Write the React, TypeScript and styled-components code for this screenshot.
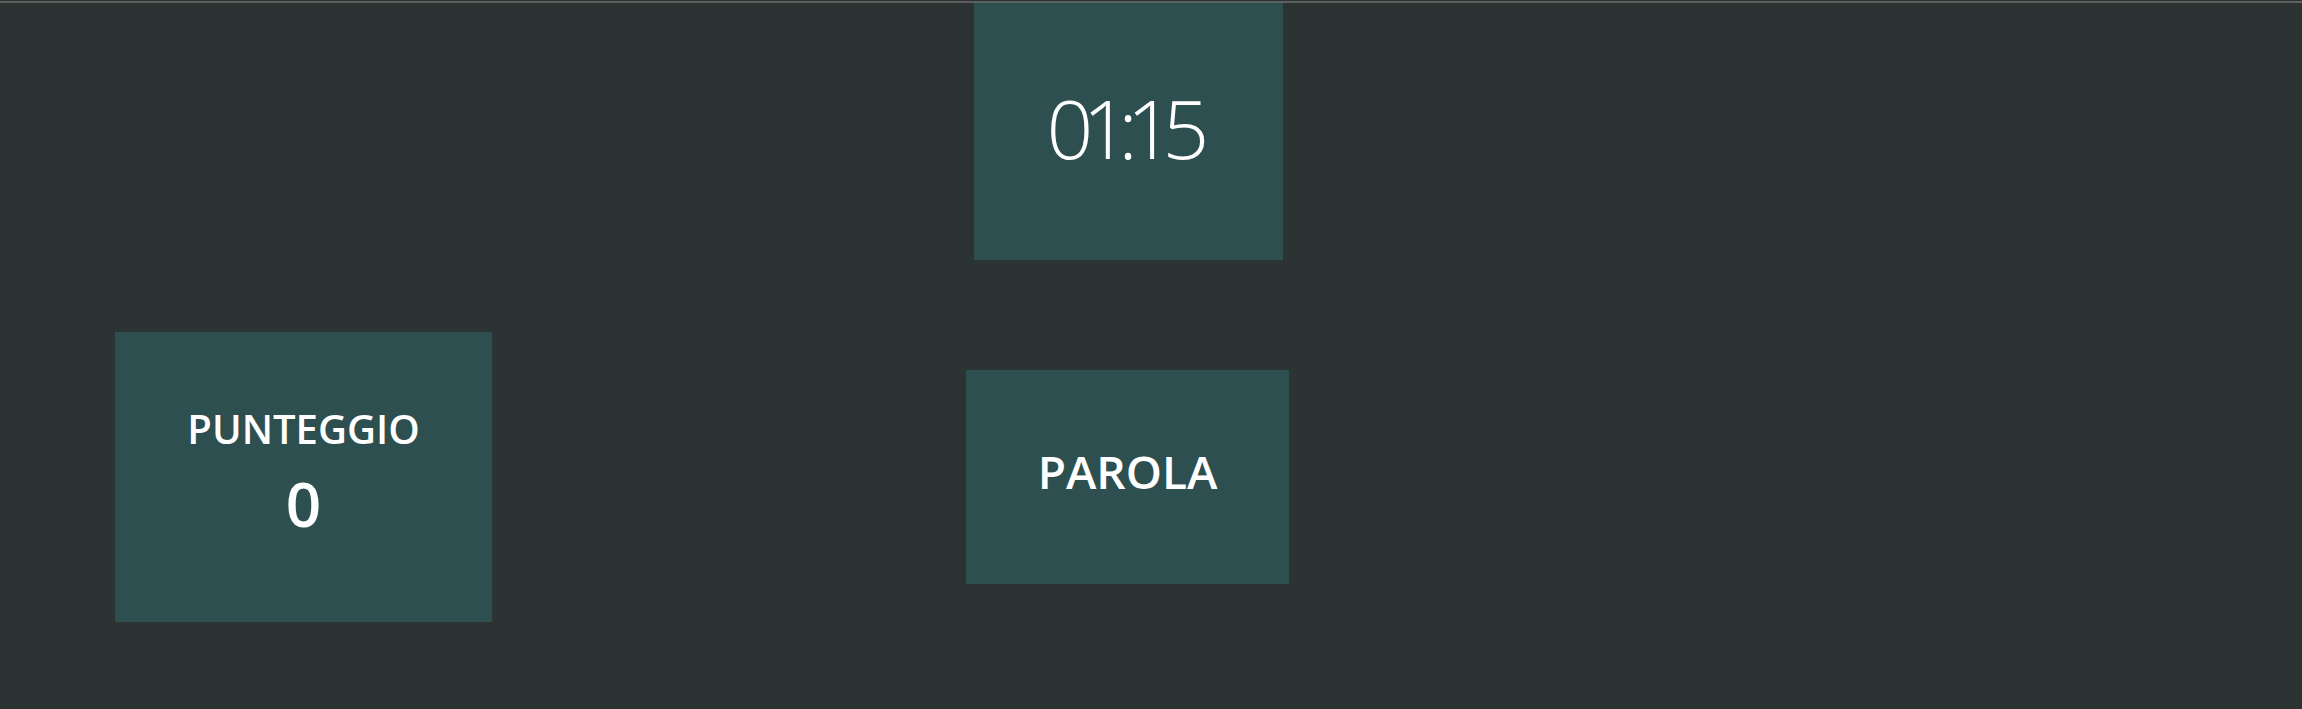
import React from "react";
import styled, { createGlobalStyle } from "styled-components";

const Global = createGlobalStyle`
  html, body { margin: 0; padding: 0; }
  body {
    background: #2b3333;
    font-family: "Open Sans", "Noto Sans", "DejaVu Sans", sans-serif;
    color: #ffffff;
  }
`;

const Page = styled.div`
  width: 2302px;
  height: 709px;
  background: #2b3333;
  border-top: 1px solid #2b3333;
  box-sizing: border-box;
  display: flex;
  flex-direction: column;
`;

const TopLine = styled.div`
  height: 2px;
  background: #5e6060;
`;

const Board = styled.div`
  display: flex;
  align-items: flex-start;
  padding-left: 115px;
  gap: 474px;
`;

const SideColumn = styled.div`
  padding-top: 329px;
`;

const CenterColumn = styled.div`
  width: 323px;
  display: flex;
  flex-direction: column;
  align-items: center;
`;

const Panel = styled.div<{ $w: number; $h: number }>`
  width: ${(p) => p.$w}px;
  height: ${(p) => p.$h}px;
  background: #2e4f4f;
  display: flex;
  flex-direction: column;
  align-items: center;
  justify-content: center;
`;

const TimerPanel = styled(Panel)`
  margin-left: 1px;
`;

const WordPanel = styled(Panel)`
  margin-top: 110px;
`;

const TimerText = styled.div`
  font-weight: 300;
  font-size: 82px;
  line-height: 1;
  letter-spacing: -11px;
  margin-right: 11px;
  margin-top: -9px;
`;

const Label = styled.div<{ $size: number }>`
  font-weight: 600;
  font-size: ${(p) => p.$size}px;
  line-height: 1.4;
`;

const ScoreValue = styled.div`
  font-weight: 600;
  font-size: 62px;
  line-height: 1.5;
`;

const ScoreStack = styled.div`
  display: flex;
  flex-direction: column;
  align-items: center;
  margin-top: -4px;
`;

const WordLabel = styled(Label)`
  margin-top: -11px;
`;

export default function App() {
  return (
    <>
      <Global />
      <Page>
        <TopLine />
        <Board>
          <SideColumn>
            <Panel $w={377} $h={290}>
              <ScoreStack>
                <Label $size={40}>PUNTEGGIO</Label>
                <ScoreValue>0</ScoreValue>
              </ScoreStack>
            </Panel>
          </SideColumn>
          <CenterColumn>
            <TimerPanel $w={309} $h={257}>
              <TimerText>01:15</TimerText>
            </TimerPanel>
            <WordPanel $w={323} $h={214}>
              <WordLabel $size={46}>PAROLA</WordLabel>
            </WordPanel>
          </CenterColumn>
        </Board>
      </Page>
    </>
  );
}
